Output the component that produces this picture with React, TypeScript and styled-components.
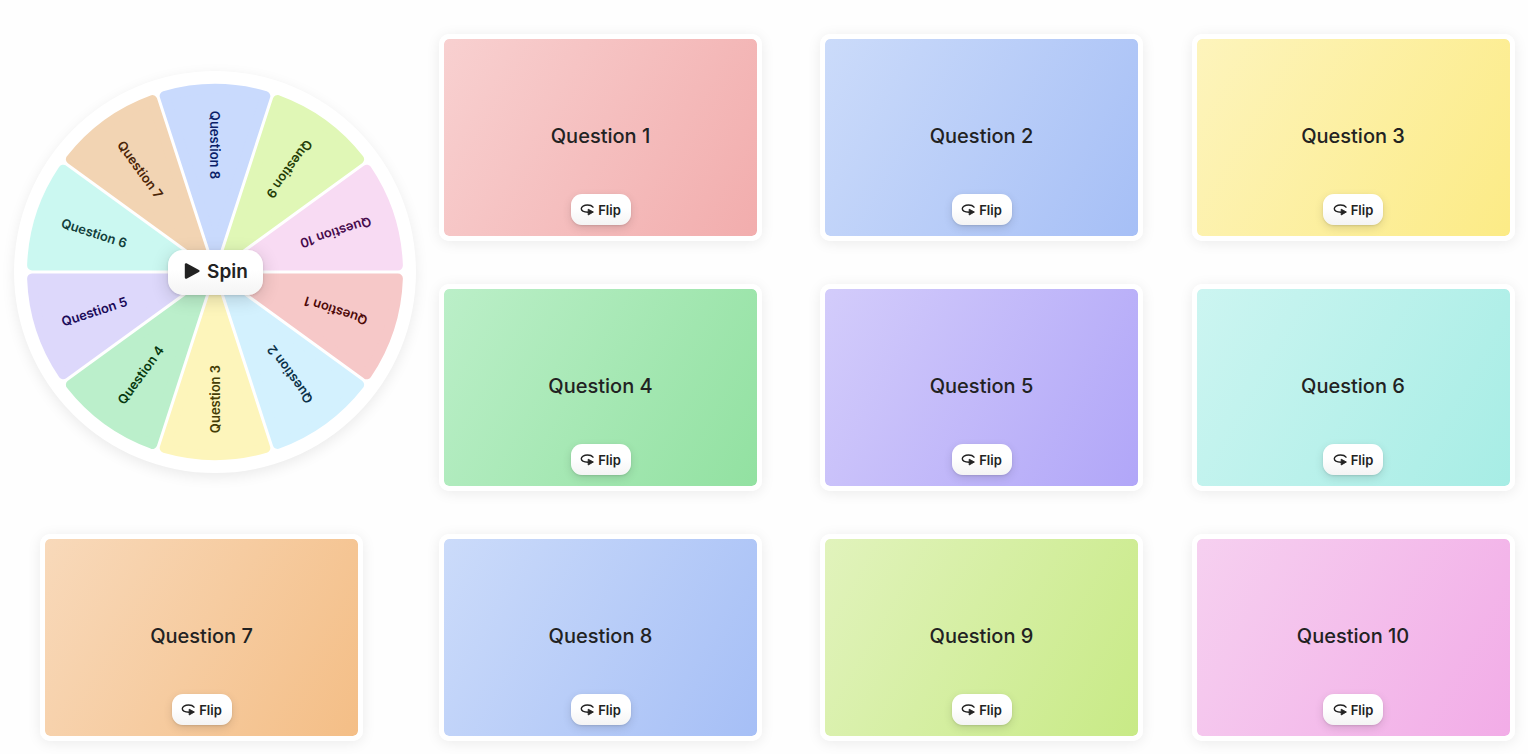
import React from 'react';
import styled, { createGlobalStyle } from 'styled-components';

const GlobalStyle = createGlobalStyle`
  *, *::before, *::after { box-sizing: border-box; }
  body {
    margin: 0;
    background: #fefefe;
    color: #222222;
    font-family: Inter, "Liberation Sans", sans-serif;
  }
`;

const Board = styled.main`
  display: grid;
  grid-template-columns: 402fr 369fr 393fr 350fr;
  row-gap: 43px;
  align-items: start;
  justify-items: center;
  padding: 34px 0 13px 14px;
`;

const WheelCell = styled.section`
  grid-row: span 2;
  width: 100%;
  margin-top: 37px;
  display: grid;
  place-items: center;
`;

const WheelDisc = styled.div`
  grid-area: 1 / 1;
  width: 100%;
  aspect-ratio: 1;
  border-radius: 50%;
  background: #ffffff;
  box-shadow: 0 4px 14px rgba(0, 0, 0, 0.08);
`;

const WheelSvg = styled.svg`
  display: block;
  width: 100%;
  height: 100%;
`;

const SegmentLabel = styled.text`
  font-size: 13px;
  font-weight: 600;
  text-anchor: middle;
`;

const Button = styled.button`
  display: inline-flex;
  align-items: center;
  justify-content: center;
  border: 0;
  color: #222222;
  font-family: inherit;
  font-weight: 600;
  white-space: nowrap;
  cursor: pointer;
  background: linear-gradient(#ffffff 45%, #f4f4f4);
`;

const SpinButton = styled(Button)`
  grid-area: 1 / 1;
  z-index: 1;
  gap: 7px;
  width: 95px;
  height: 45px;
  padding: 0 0 2px 2px;
  border-radius: 15px;
  font-size: 19px;
  box-shadow: 0 1px 3px rgba(0, 0, 0, 0.12), 0 4px 18px rgba(0, 0, 0, 0.16);
`;

const FlipButton = styled(Button)`
  gap: 4px;
  width: 60px;
  height: 31px;
  padding: 0;
  border-radius: 11px;
  font-size: 13px;
  box-shadow: 0 1px 2px rgba(0, 0, 0, 0.1), 0 3px 10px rgba(0, 0, 0, 0.12);
`;

const Card = styled.article<{ $from: string; $to: string; $first: boolean }>`
  display: grid;
  grid-template-rows: 1fr auto 1fr;
  justify-items: center;
  width: 323px;
  max-width: 94%;
  min-height: 207px;
  padding: 0 0 11px;
  border: 5px solid #ffffff;
  border-radius: 10px;
  background: linear-gradient(120deg, ${(p) => p.$from}, ${(p) => p.$to}) padding-box;
  box-shadow: 0 2px 14px rgba(0, 0, 0, 0.08);
  ${(p) => p.$first && 'justify-self: start; margin-left: 26px;'}
`;

const CardTitle = styled.h2`
  grid-row: 2;
  margin: 8px 0 0;
  font-size: 20px;
  line-height: 28px;
  font-weight: 500;
`;

const CardFooter = styled.div`
  grid-row: 3;
  align-self: end;
  display: flex;
`;

const questions = [
  { wheel: '#f6c8c8', ink: '#4d0808', from: '#f8d0d0', to: '#f2adad' },
  { wheel: '#d3f1fe', ink: '#0a3047', from: '#cbdbfa', to: '#a6bff6' },
  { wheel: '#fdf5bb', ink: '#443c05', from: '#fdf4bc', to: '#fceb86' },
  { wheel: '#bbefcb', ink: '#07380f', from: '#bbefc8', to: '#92e1a1' },
  { wheel: '#ddd8fb', ink: '#1b0a58', from: '#d3ccfb', to: '#b1a6f8' },
  { wheel: '#cbf8f1', ink: '#123f3b', from: '#ccf5f1', to: '#a7ede5' },
  { wheel: '#f2d4b3', ink: '#4a2407', from: '#f8d9ba', to: '#f4be86' },
  { wheel: '#c9dafd', ink: '#0a1e68', from: '#cbdbfa', to: '#a6bff6' },
  { wheel: '#e0f7b6', ink: '#243d06', from: '#e1f3bc', to: '#c8ea86' },
  { wheel: '#f8dbf3', ink: '#460a4c', from: '#f6d0f0', to: '#f2ace7' },
].map((q, i) => ({ ...q, label: `Question ${i + 1}` }));

const STEP = 360 / questions.length;
const CORNER = 5;
const INSET = CORNER + 1.5;
const RADIUS = 188 - CORNER;

// A wedge pointing right, inset so that its rounded outline leaves a white gap to its neighbours.
const wedgePath = (() => {
  const half = (STEP / 2) * (Math.PI / 180);
  const edge = half - Math.asin(INSET / RADIUS);
  const apex = INSET / Math.sin(half);
  const x = RADIUS * Math.cos(edge);
  const y = RADIUS * Math.sin(edge);
  return `M${apex} 0L${x} ${-y}A${RADIUS} ${RADIUS} 0 0 1 ${x} ${y}Z`;
})();

function Wheel() {
  return (
    <WheelDisc>
      <WheelSvg viewBox="-201 -201 402 402" role="img" aria-label="Question wheel">
        {questions.map((q, i) => (
          <g key={q.label} transform={`rotate(${STEP / 2 + i * STEP})`}>
            <path
              d={wedgePath}
              fill={q.wheel}
              stroke={q.wheel}
              strokeWidth={CORNER * 2}
              strokeLinejoin="round"
            />
            <SegmentLabel x={-127} y={5} fill={q.ink} transform="rotate(180)">
              {q.label}
            </SegmentLabel>
          </g>
        ))}
      </WheelSvg>
    </WheelDisc>
  );
}

function PlayIcon() {
  return (
    <svg width="16" height="18" viewBox="0 0 16 18" aria-hidden="true">
      <path
        d="M2 2.4v13.2L14.4 9z"
        fill="currentColor"
        stroke="currentColor"
        strokeWidth="2.4"
        strokeLinejoin="round"
      />
    </svg>
  );
}

function FlipIcon() {
  return (
    <svg width="14" height="12" viewBox="0 0 14 12" fill="none" aria-hidden="true">
      <path
        d="M13 3.2C12 1.8 10 1 7.5 1 4 1 1.3 2.6 1.3 4.7c0 1.8 2.4 3.3 6.8 3.5"
        stroke="currentColor"
        strokeWidth="1.4"
        strokeLinecap="round"
      />
      <path
        d="M8.2 5.2v5.8L13.4 8z"
        fill="currentColor"
        stroke="currentColor"
        strokeWidth="0.9"
        strokeLinejoin="round"
      />
    </svg>
  );
}

export default function App() {
  return (
    <>
      <GlobalStyle />
      <Board>
        <WheelCell>
          <Wheel />
          <SpinButton type="button">
            <PlayIcon />
            Spin
          </SpinButton>
        </WheelCell>
        {questions.map((q, i) => (
          <Card key={q.label} $from={q.from} $to={q.to} $first={i === 6}>
            <CardTitle>{q.label}</CardTitle>
            <CardFooter>
              <FlipButton type="button">
                <FlipIcon />
                Flip
              </FlipButton>
            </CardFooter>
          </Card>
        ))}
      </Board>
    </>
  );
}
